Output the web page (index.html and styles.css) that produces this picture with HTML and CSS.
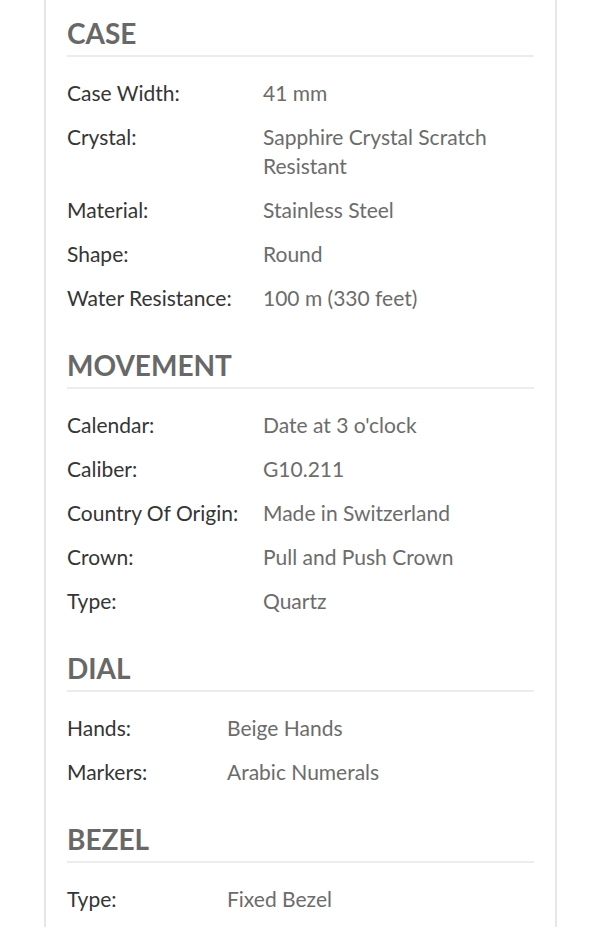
FILE: index.html
```html
<!DOCTYPE html>
<html lang="en">
<head>
<meta charset="utf-8">
<title>Specifications</title>
<link rel="stylesheet" href="styles.css">
</head>
<body>
<div class="card">
  <section class="spec">
    <h2 class="spec-title">CASE</h2>
    <dl class="spec-list wide">
      <dt>Case Width:</dt><dd>41 mm</dd>
      <dt>Crystal:</dt><dd>Sapphire Crystal Scratch Resistant</dd>
      <dt>Material:</dt><dd>Stainless Steel</dd>
      <dt>Shape:</dt><dd>Round</dd>
      <dt>Water Resistance:</dt><dd>100 m (330 feet)</dd>
    </dl>
  </section>
  <section class="spec">
    <h2 class="spec-title">MOVEMENT</h2>
    <dl class="spec-list wide">
      <dt>Calendar:</dt><dd>Date at 3 o'clock</dd>
      <dt>Caliber:</dt><dd>G10.211</dd>
      <dt>Country Of Origin:</dt><dd>Made in Switzerland</dd>
      <dt>Crown:</dt><dd>Pull and Push Crown</dd>
      <dt>Type:</dt><dd>Quartz</dd>
    </dl>
  </section>
  <section class="spec">
    <h2 class="spec-title">DIAL</h2>
    <dl class="spec-list narrow">
      <dt>Hands:</dt><dd>Beige Hands</dd>
      <dt>Markers:</dt><dd>Arabic Numerals</dd>
    </dl>
  </section>
  <section class="spec">
    <h2 class="spec-title">BEZEL</h2>
    <dl class="spec-list narrow">
      <dt>Type:</dt><dd>Fixed Bezel</dd>
    </dl>
  </section>
</div>
</body>
</html>
```
FILE: styles.css
```css
html, body {
  margin: 0;
  padding: 0;
  background: #ffffff;
}
body {
  font-family: Lato, "Open Sans", sans-serif;
  height: 927px;
  overflow: hidden;
}
.card {
  margin: 0 43px 0 44px;
  min-height: 927px;
  border-left: 2px solid #e6e6e6;
  border-right: 2px solid #e6e6e6;
  padding: 16px 21px 0 21px;
  box-sizing: border-box;
}
.spec + .spec {
  margin-top: 36px;
}
.spec-title {
  margin: 0;
  font-size: 28px;
  line-height: 34px;
  font-weight: 700;
  color: #686868;
  padding-bottom: 5px;
  border-bottom: 2px solid #ececec;
}
.spec-list {
  margin: 21px 0 0 0;
  display: grid;
  row-gap: 15px;
  font-size: 21px;
  line-height: 29px;
}
.spec-list.wide {
  grid-template-columns: 196px 1fr;
}
.spec-list.narrow {
  grid-template-columns: 160px 1fr;
}
.spec-list dt {
  color: #353535;
  margin: 0;
}
.spec-list dd {
  color: #6c6c6c;
  margin: 0;
  padding-right: 40px;
}
```
